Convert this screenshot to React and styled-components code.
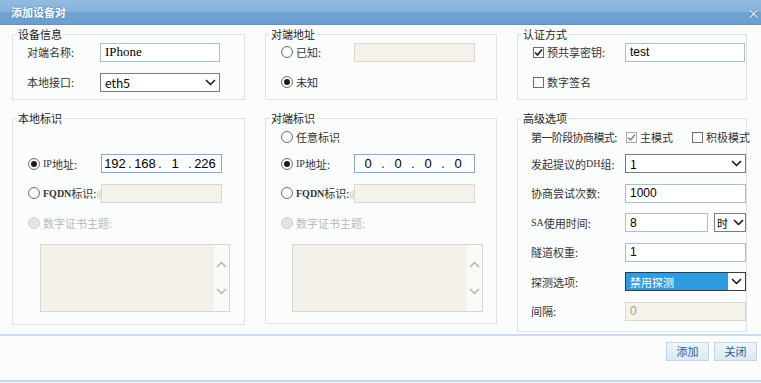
import React from "react";
import styled, { createGlobalStyle } from "styled-components";

const GlobalStyle = createGlobalStyle`
  html, body { margin: 0; padding: 0; background: #ffffff; }
  body {
    font-family: "Noto Sans CJK SC", "Liberation Sans", sans-serif;
    font-size: 11px;
    color: #333;
  }
`;

const Dialog = styled.div`
  width: 761px;
  height: 383px;
  display: flex;
  flex-direction: column;
  background: #fbfdfd;
  overflow: hidden;
`;

const TitleBar = styled.div`
  height: 24px;
  flex: none;
  border-bottom: 1px solid #5d93c5;
  background: linear-gradient(#93bde0 0%, #86b2da 48%, #71a5d3 52%, #6a9fd0 100%);
  display: flex;
  align-items: center;
  justify-content: space-between;
  padding-left: 11px;
  color: #fff;
  font-weight: bold;
  text-shadow: 0 0 2px #3f72a3;
`;

const Close = styled.span`
  font-size: 13px;
  font-weight: normal;
  margin-right: 1px;
  color: #f4f8fc;
`;

const Main = styled.div`
  flex: 1;
  padding: 9px 0 0 12px;
  display: grid;
  grid-template-columns: 233px 232px 230px;
  column-gap: 20px;
  row-gap: 18px;
  align-items: start;
  align-content: start;
`;

const Panel = styled.div`
  position: relative;
  border: 1px solid #e1e1e1;
  padding: ${(p) => p.$pad};
`;

const Legend = styled.span`
  position: absolute;
  top: -8px;
  left: 4px;
  padding: 0 1px;
  line-height: 14px;
  background: #fbfdfd;
  color: #222;
`;

const Row = styled.div`
  display: flex;
  align-items: center;
  height: ${(p) => p.$h || 30}px;
`;

const Cap = styled.div`
  width: ${(p) => p.$w}px;
  flex: none;
  display: flex;
  align-items: center;
  white-space: nowrap;
  letter-spacing: ${(p) => (p.$tight ? "-0.6px" : "0")};
  color: ${(p) => (p.$off ? "#b8b8b8" : "#333")};
`;

const Latin = styled.span`
  font-family: "Liberation Serif", serif;
  font-size: 10px;
  font-weight: ${(p) => (p.$bold ? "bold" : "normal")};
`;

const Gap = styled.span`
  flex: 1;
`;

const At = styled.span`
  font-size: 9px;
  color: #b0b0b0;
  margin-right: 3px;
`;

const Field = styled.div`
  width: ${(p) => p.$w}px;
  height: 19px;
  box-sizing: border-box;
  flex: none;
  border: 1px solid ${(p) => (p.$off ? "#d9d7ce" : p.$focus ? "#86aad6" : "#aabed5")};
  background: ${(p) => (p.$off ? "#f4f2ea" : "#fff")};
  color: ${(p) => (p.$off ? "#a0a0a0" : "#000")};
  font-family: ${(p) => (p.$serif ? '"Liberation Serif", serif' : '"Liberation Sans", sans-serif')};
  font-size: ${(p) => (p.$serif ? 13 : 12)}px;
  padding: 0 4px;
  display: flex;
  align-items: center;
`;

const IpBox = styled(Field)`
  padding: 0 0 0 1px;
`;

const Octet = styled.span`
  width: 24px;
  text-align: center;
  font-size: 13px;
`;

const Dot = styled.span`
  width: 6px;
  text-align: center;
`;

const Select = styled.div`
  width: ${(p) => p.$w}px;
  height: 19px;
  box-sizing: border-box;
  flex: none;
  border: 1px solid ${(p) => (p.$focus ? "#3a3a3a" : "#7b7b7b")};
  background: #fff;
  display: flex;
  align-items: stretch;
  font-family: "Liberation Sans", "Noto Sans CJK SC", sans-serif;
  font-size: 12px;
  color: #000;
`;

const SelValue = styled.span`
  flex: 1;
  display: flex;
  align-items: center;
  padding-left: ${(p) => (p.$narrow ? 2 : 4)}px;
  background: ${(p) => (p.$hl ? "#2f9be0" : "transparent")};
  color: ${(p) => (p.$hl ? "#fff" : "#000")};
  font-family: "Noto Sans CJK SC", "Liberation Sans", sans-serif;
  font-size: ${(p) => (p.$cjk ? 11 : 12)}px;
`;

const Arrow = styled.span`
  width: ${(p) => (p.$narrow ? 14 : 17)}px;
  display: flex;
  align-items: center;
  justify-content: center;
`;

const RadioDot = styled.span`
  width: 12px;
  height: 12px;
  box-sizing: border-box;
  border-radius: 50%;
  flex: none;
  margin-right: 3px;
  border: 1px solid ${(p) => (p.$off ? "#cfcfcf" : "#6f6f6f")};
  background: ${(p) => (p.$off ? "#e4e4e4" : "radial-gradient(circle, #ffffff 40%, #ececec 100%)")};
  display: flex;
  align-items: center;
  justify-content: center;
  &::after {
    content: "";
    width: 6px;
    height: 6px;
    border-radius: 50%;
    background: ${(p) => (p.$on ? "#1b1b1b" : "transparent")};
  }
`;

const Box = styled.span`
  width: 11px;
  height: 11px;
  box-sizing: border-box;
  flex: none;
  margin-right: 3px;
  border: 1px solid ${(p) => (p.$off ? "#a9a9a9" : "#6e6e6e")};
  background: #fff;
  display: flex;
  align-items: center;
  justify-content: center;
`;

const Group = styled.div`
  width: ${(p) => p.$w}px;
  display: flex;
  align-items: center;
  flex: none;
  white-space: nowrap;
  color: #333;
`;

const Memo = styled.div`
  margin-left: ${(p) => p.$ml}px;
  margin-top: 6px;
  width: ${(p) => p.$w}px;
  height: 68px;
  box-sizing: border-box;
  border: 1px solid #d8d6cd;
  background: #f3f1e9;
  display: flex;
  justify-content: flex-end;
`;

const Track = styled.div`
  width: 15px;
  background: #f9f9f7;
  display: flex;
  flex-direction: column;
  justify-content: space-around;
  align-items: center;
  padding: 6px 0;
`;

const Footer = styled.div`
  flex: none;
  height: 38px;
  border-top: 2px solid #c9dcee;
  border-bottom: 2px solid #c8d5e3;
  margin-bottom: 1px;
  display: flex;
  justify-content: flex-end;
  align-items: flex-start;
  padding: 6px 4px 0 0;
  gap: 5px;
`;

const Button = styled.button`
  width: 43px;
  height: 19px;
  padding: 0;
  border: 1px solid #c3d6ea;
  background: linear-gradient(#eef5fc, #dbe8f5);
  color: #2f5f8e;
  font-family: "Noto Sans CJK SC", sans-serif;
  font-size: 11px;
  line-height: 17px;
`;

const Chevron = ({ up, color = "#111" }) => (
  <svg width="11" height="7" viewBox="0 0 11 7">
    <path
      d={up ? "M1 6 L5.5 1.5 L10 6" : "M1 1 L5.5 5.5 L10 1"}
      fill="none"
      stroke={color}
      strokeWidth="1.5"
    />
  </svg>
);

const Tick = ({ color }) => (
  <svg width="9" height="9" viewBox="0 0 9 9">
    <path d="M1 4.5 L3.5 7 L8 1.5" fill="none" stroke={color} strokeWidth="1.7" />
  </svg>
);

const Radio = ({ on, off, children }) => (
  <>
    <RadioDot $on={on} $off={off} />
    {children}
  </>
);

const Check = ({ on, off, children }) => (
  <>
    <Box $off={off}>{on && <Tick color={off ? "#8a8a8a" : "#222"} />}</Box>
    {children}
  </>
);

const Dropdown = ({ w, value, hl, focus, cjk, narrow }) => (
  <Select $w={w} $focus={focus}>
    <SelValue $hl={hl} $cjk={cjk} $narrow={narrow}>
      {value}
    </SelValue>
    <Arrow $narrow={narrow}>
      <Chevron />
    </Arrow>
  </Select>
);

const Ip = ({ w, parts, focus }) => (
  <IpBox $w={w} $focus={focus}>
    {parts.map((n, i) => (
      <React.Fragment key={i}>
        {i > 0 && <Dot>.</Dot>}
        <Octet>{n}</Octet>
      </React.Fragment>
    ))}
  </IpBox>
);

const Subject = ({ ml, w }) => (
  <>
    <Row>
      <Cap $w={120} $off>
        <Radio off>数字证书主题:</Radio>
      </Cap>
    </Row>
    <Memo $ml={ml} $w={w}>
      <Track>
        <Chevron up color="#b5b5b5" />
        <Chevron color="#b5b5b5" />
      </Track>
    </Memo>
  </>
);

const Fqdn = () => (
  <Cap $w={73}>
    <Radio>
      <Latin $bold>FQDN</Latin>标识:
    </Radio>
    <Gap />
    <At>@</At>
  </Cap>
);

export default function App() {
  return (
    <Dialog>
      <GlobalStyle />
      <TitleBar>
        添加设备对
        <Close>×</Close>
      </TitleBar>

      <Main>
        <Panel $pad="2px 0 2px 14px">
          <Legend>设备信息</Legend>
          <Row>
            <Cap $w={73}>对端名称:</Cap>
            <Field $w={120} $serif>IPhone</Field>
          </Row>
          <Row>
            <Cap $w={73}>本地接口:</Cap>
            <Dropdown w={120} value="eth5" />
          </Row>
        </Panel>

        <Panel $pad="2px 0 2px 15px">
          <Legend>对端地址</Legend>
          <Row>
            <Cap $w={73}>
              <Radio>已知:</Radio>
            </Cap>
            <Field $w={121} $off />
          </Row>
          <Row>
            <Cap $w={73}>
              <Radio on>未知</Radio>
            </Cap>
          </Row>
        </Panel>

        <Panel $pad="2px 0 2px 15px">
          <Legend>认证方式</Legend>
          <Row>
            <Cap $w={92}>
              <Check on>预共享密钥:</Check>
            </Cap>
            <Field $w={120}>test</Field>
          </Row>
          <Row>
            <Cap $w={92}>
              <Check>数字签名</Check>
            </Cap>
          </Row>
        </Panel>

        <Panel $pad="6px 0 12px 15px">
          <Legend>本地标识</Legend>
          <Row $h={24} />
          <Row $h={29.5}>
            <Cap $w={73}>
              <Radio on>
                <Latin>IP</Latin>地址:
              </Radio>
            </Cap>
            <Ip w={121} parts={["192", "168", "1", "226"]} focus />
          </Row>
          <Row $h={29.5}>
            <Fqdn />
            <Field $w={121} $off />
          </Row>
          <Subject ml={12} w={190} />
        </Panel>

        <Panel $pad="6px 0 11px 15px">
          <Legend>对端标识</Legend>
          <Row $h={24}>
            <Cap $w={73}>
              <Radio>任意标识</Radio>
            </Cap>
          </Row>
          <Row $h={29.5}>
            <Cap $w={73}>
              <Radio on>
                <Latin>IP</Latin>地址:
              </Radio>
            </Cap>
            <Ip w={121} parts={["0", "0", "0", "0"]} focus />
          </Row>
          <Row $h={29.5}>
            <Fqdn />
            <Field $w={121} $off />
          </Row>
          <Subject ml={11} w={191} />
        </Panel>

        <Panel $pad="6px 0 5px 13px">
          <Legend>高级选项</Legend>
          <Row $h={24}>
            <Cap $w={95} $tight>
              第一阶段协商模式:
            </Cap>
            <Group $w={66}>
              <Check on off>主模式</Check>
            </Group>
            <Group $w={58}>
              <Check>积极模式</Check>
            </Group>
          </Row>
          <Row $h={29.5}>
            <Cap $w={94}>
              发起提议的<Latin>DH</Latin>组:
            </Cap>
            <Dropdown w={121} value="1" />
          </Row>
          <Row $h={29.5}>
            <Cap $w={94}>协商尝试次数:</Cap>
            <Field $w={121}>1000</Field>
          </Row>
          <Row $h={29.5}>
            <Cap $w={94}>
              <Latin>SA</Latin>使用时间:
            </Cap>
            <Field $w={83}>8</Field>
            <Group $w={6} />
            <Dropdown w={32} value="时" cjk narrow />
          </Row>
          <Row $h={29.5}>
            <Cap $w={94}>隧道权重:</Cap>
            <Field $w={121}>1</Field>
          </Row>
          <Row $h={29.5}>
            <Cap $w={94}>探测选项:</Cap>
            <Dropdown w={121} value="禁用探测" hl focus cjk />
          </Row>
          <Row $h={29.5}>
            <Cap $w={94}>间隔:</Cap>
            <Field $w={121} $off>0</Field>
          </Row>
        </Panel>
      </Main>

      <Footer>
        <Button>添加</Button>
        <Button>关闭</Button>
      </Footer>
    </Dialog>
  );
}
